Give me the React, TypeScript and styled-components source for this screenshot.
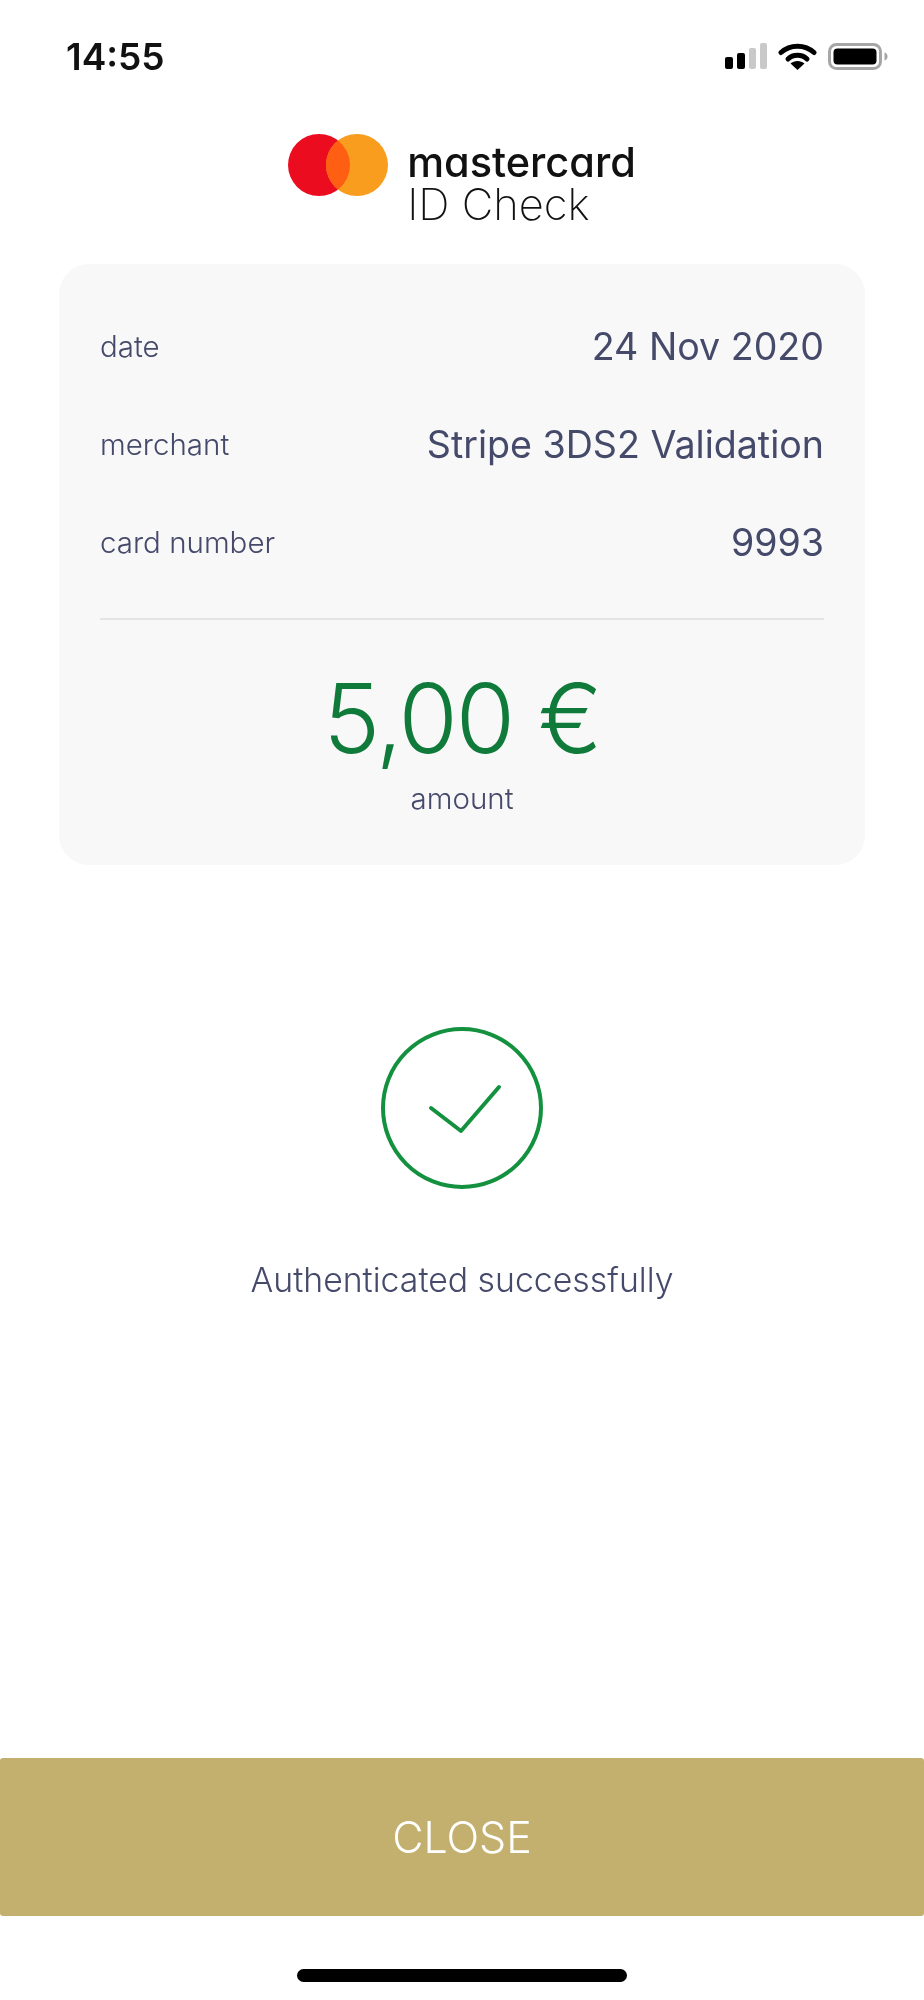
import type { FC } from "react"
import styled, { createGlobalStyle } from "styled-components"

const GlobalStyle = createGlobalStyle`
  html, body {
    margin: 0;
    padding: 0;
    background: #ffffff;
  }
`

const Screen = styled.main`
  width: 924px;
  height: 2000px;
  display: flex;
  flex-direction: column;
  font-family: "Inter", "Liberation Sans", sans-serif;
  color: #45496a;
  background: #ffffff;
  overflow: hidden;
  filter: blur(0.6px);
`

const StatusBar = styled.header`
  height: 92px;
  box-sizing: border-box;
  padding: 38px 36px 0 66px;
  display: flex;
  justify-content: space-between;
  align-items: flex-start;
`

const Time = styled.span`
  font-size: 37px;
  line-height: 38px;
  font-weight: 600;
  color: #111111;
`

const StatusIcons = styled.div`
  display: flex;
  align-items: center;
  gap: 11px;
  padding-top: 4px;
`

const Logo = styled.div`
  height: 88px;
  margin: 42px 0 42px;
  display: flex;
  justify-content: center;
  align-items: flex-start;
  gap: 19px;
`

const LogoText = styled.div`
  padding-top: 7px;
  display: flex;
  flex-direction: column;
  color: #111111;
`

const LogoName = styled.span`
  font-size: 41.5px;
  line-height: 42px;
  font-weight: 500;
  font-feature-settings: "cv11";
`

const LogoProduct = styled.span`
  font-size: 43.5px;
  line-height: 42px;
  font-weight: 200;
`

const Card = styled.section`
  height: 601px;
  box-sizing: border-box;
  margin: 0 59px;
  padding: 33px 41px 0;
  display: flex;
  flex-direction: column;
  background: #f8f8f8;
  border-radius: 30px;
`

const Row = styled.div`
  height: 98px;
  display: flex;
  justify-content: space-between;
  align-items: center;
`

const Label = styled.span`
  font-size: 29.5px;
  font-weight: 300;
`

const Value = styled.span`
  font-size: 37.6px;
  font-weight: 400;
`

const Divider = styled.hr`
  width: 100%;
  height: 2px;
  margin: 27px 0 0;
  border: 0;
  background: #e4e4e6;
`

const Amount = styled.div`
  margin-top: 38px;
  text-align: center;
  font-size: 96px;
  line-height: 120px;
  letter-spacing: -2px;
  font-weight: 300;
  color: #0f7a3a;
`

const AmountLabel = styled(Label)`
  margin-top: 2px;
  text-align: center;
`

const Result = styled.section`
  margin-top: 162px;
  display: flex;
  flex-direction: column;
  align-items: center;
  gap: 71px;
`

const ResultText = styled.p`
  margin: 0;
  font-size: 33.8px;
  line-height: 40px;
  font-weight: 300;
`

const CloseButton = styled.button`
  width: 100%;
  height: 158px;
  margin-top: auto;
  padding: 0;
  border: 0;
  border-radius: 3px;
  background: #c3b06f;
  color: #ffffff;
  font-family: inherit;
  font-size: 43px;
  font-weight: 300;
`

const HomeBar = styled.div`
  width: 330px;
  height: 13px;
  margin: 53px auto 18px;
  flex: none;
  border-radius: 7px;
  background: #000000;
`

const SignalIcon: FC = () => (
  <svg width="42" height="26" viewBox="0 0 42 26">
    <rect x="0" y="14" width="8" height="12" rx="2" fill="#000" />
    <rect x="12" y="10" width="8" height="16" rx="2" fill="#000" />
    <rect x="24" y="5" width="7" height="21" rx="2" fill="#c9c9c9" />
    <rect x="35" y="0" width="7" height="26" rx="2" fill="#c9c9c9" />
  </svg>
)

const WifiIcon: FC = () => (
  <svg width="39" height="28" viewBox="0 0 39 28">
    <path d="M3 10.5 C12 2 27 2 36 10.5" fill="none" stroke="#000" strokeWidth="5" strokeLinecap="round" />
    <path d="M10 17 C15 12 24 12 29 17" fill="none" stroke="#000" strokeWidth="5" strokeLinecap="round" />
    <path d="M19.5 28 L12.5 21.5 C16 18 23 18 26.5 21.5 Z" fill="#000" />
  </svg>
)

const BatteryIcon: FC = () => (
  <svg width="60" height="27" viewBox="0 0 60 27">
    <rect x="1.5" y="1.5" width="51" height="24" rx="7" fill="none" stroke="#a6a6a6" strokeWidth="3" />
    <rect x="5.5" y="5.5" width="43" height="16" rx="4" fill="#000" />
    <path d="M56.5 9.5 C58.5 10 59.5 11.5 59.5 13.5 C59.5 15.5 58.5 17 56.5 17.5 Z" fill="#a6a6a6" />
  </svg>
)

const LogoMark: FC = () => (
  <svg width="100" height="62" viewBox="0 0 100 62">
    <circle cx="31" cy="31" r="31" fill="#eb0c1f" />
    <circle cx="69" cy="31" r="31" fill="#f99d1f" />
    <path d="M50 6.5 A31 31 0 0 1 50 55.5 A31 31 0 0 1 50 6.5 Z" fill="#ff5f13" />
  </svg>
)

const CheckIcon: FC = () => (
  <svg width="162" height="162" viewBox="0 0 162 162">
    <circle cx="81" cy="81" r="79" fill="none" stroke="#13913f" strokeWidth="4" />
    <path d="M50 81 L80 104 L118 60" fill="none" stroke="#13913f" strokeWidth="4" strokeLinecap="round" strokeLinejoin="round" />
  </svg>
)

const details = [
  { label: "date", value: "24 Nov 2020" },
  { label: "merchant", value: "Stripe 3DS2 Validation" },
  { label: "card number", value: "9993" },
]

const App: FC = () => (
  <Screen>
    <GlobalStyle />
    <StatusBar>
      <Time>14:55</Time>
      <StatusIcons>
        <SignalIcon />
        <WifiIcon />
        <BatteryIcon />
      </StatusIcons>
    </StatusBar>
    <Logo>
      <LogoMark />
      <LogoText>
        <LogoName>mastercard</LogoName>
        <LogoProduct>ID Check</LogoProduct>
      </LogoText>
    </Logo>
    <Card>
      {details.map(item => (
        <Row key={item.label}>
          <Label>{item.label}</Label>
          <Value>{item.value}</Value>
        </Row>
      ))}
      <Divider />
      <Amount>5,00 €</Amount>
      <AmountLabel>amount</AmountLabel>
    </Card>
    <Result>
      <CheckIcon />
      <ResultText>Authenticated successfully</ResultText>
    </Result>
    <CloseButton>CLOSE</CloseButton>
    <HomeBar />
  </Screen>
)

export default App
